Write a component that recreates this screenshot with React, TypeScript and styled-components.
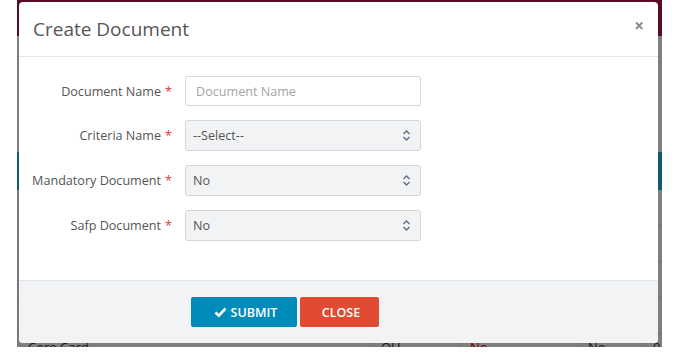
import * as React from 'react';
import styled, { createGlobalStyle } from 'styled-components';

const GlobalStyle = createGlobalStyle`
  html, body {
    margin: 0;
    padding: 0;
    background: #ffffff;
    font-family: "Open Sans", "Liberation Sans", sans-serif;
  }
`;

const Frame = styled.div`
  padding-left: 17px;
`;

const PageDiv = styled.div`
  position: relative;
  width: 645px;
  height: 347px;
  overflow: hidden;
  background: #ffffff;
`;

const NavBar = styled.div`
  height: 36px;
  background: #b8164a;
`;

const PageHeading = styled.div`
  height: 116px;
`;

const TableHead = styled.div`
  height: 38px;
  background: #1ab6de;
`;

const TableRow = styled.div`
  display: grid;
  grid-template-columns: 353px 89px 118px 65px 1fr;
  height: 35px;
  border-bottom: 1px solid #dddddd;
  font-size: 13px;
  line-height: 16px;
  color: #333;
`;

const Cell = styled.div<{ $red?: boolean }>`
  height: 100%;
  box-sizing: border-box;
  padding: 5px 0 0 10px;
  border-left: 1px solid #e6e6e6;
  color: ${p => (p.$red ? '#d40000' : '#333')};
`;

const Backdrop = styled.div`
  position: absolute;
  inset: 0;
  background: rgba(0, 0, 0, 0.5);
  padding: 2px 4px 4px 2px;
  display: flex;
`;

const Modal = styled.div`
  flex: 1;
  display: flex;
  flex-direction: column;
  background: #ffffff;
  border-radius: 4px;
  overflow: hidden;
`;

const ModalHeader = styled.div`
  height: 55px;
  display: flex;
  align-items: center;
  justify-content: space-between;
  padding: 0 14px 0 14px;
  box-sizing: border-box;
  border-bottom: 1px solid #e5e5e5;
`;

const Title = styled.h4`
  margin: 0;
  font-size: 19px;
  font-weight: 400;
  color: #555555;
`;

const CloseX = styled.span`
  font-size: 17px;
  font-weight: 700;
  color: #8a8a8a;
  line-height: 1;
  margin-top: -8px;
`;

const ModalBody = styled.div`
  flex: 1;
  padding-top: 19px;
  display: flex;
  flex-direction: column;
  gap: 14px;
`;

const FormRow = styled.div`
  display: flex;
  align-items: center;
  gap: 13px;
`;

const Label = styled.label`
  width: 153px;
  text-align: right;
  font-size: 12.6px;
  color: #555555;
`;

const Star = styled.span`
  color: #e0393e;
  margin-left: 4px;
`;

const TextInput = styled.input`
  width: 236px;
  height: 30px;
  box-sizing: border-box;
  border: 1px solid #d5d8dd;
  border-radius: 2px;
  padding: 0 10px;
  font-family: "Open Sans", "Liberation Sans", sans-serif;
  font-size: 12.6px;
  color: #555;
  outline: none;
  &::placeholder {
    color: #a5a5a5;
  }
`;

const SelectBox = styled.div`
  width: 236px;
  height: 31px;
  box-sizing: border-box;
  border: 1px solid #d3d6db;
  border-radius: 3px;
  background: #f2f3f5;
  padding: 0 9px 0 7px;
  display: flex;
  align-items: center;
  justify-content: space-between;
  font-size: 12.6px;
  color: #555555;
`;

const ModalFooter = styled.div`
  height: 63px;
  box-sizing: border-box;
  border-top: 1px solid #e1e4e8;
  background: #f2f3f5;
  display: flex;
  align-items: center;
  gap: 3px;
  padding-left: 172px;
`;

const Button = styled.button<{ $color: string; $width: number }>`
  width: ${p => p.$width}px;
  height: 30px;
  padding: 0 0 0 3px;
  border: none;
  border-radius: 2px;
  background: ${p => p.$color};
  color: #ffffff;
  font-family: "Open Sans", "Liberation Sans", sans-serif;
  font-size: 12.5px;
  font-weight: 600;
  display: flex;
  align-items: center;
  justify-content: center;
  gap: 4px;
`;

const Chevrons = () => (
  <svg width="9" height="13" viewBox="0 0 9 13">
    <path d="M1.5 5 L4.5 2 L7.5 5 M1.5 8 L4.5 11 L7.5 8" fill="none" stroke="#5e6d8c" strokeWidth="1.4" />
  </svg>
);

const CheckIcon = () => (
  <svg width="13" height="12" viewBox="0 0 13 12">
    <path d="M1.5 6.5 L4.8 9.6 L11.5 2.5" fill="none" stroke="#ffffff" strokeWidth="2.6" />
  </svg>
);

const rows = [
  { name: 'Document Name', input: true },
  { name: 'Criteria Name', value: '--Select--' },
  { name: 'Mandatory Document', value: 'No' },
  { name: 'Safp Document', value: 'No' },
];

const App = () => {
  return (
    <Frame>
      <GlobalStyle />
      <PageDiv>
        <NavBar />
        <PageHeading />
        <TableHead />
        {[0, 1, 2, 3].map(i => (
          <TableRow key={i}>
            <Cell />
            <Cell />
            <Cell />
            <Cell />
            <Cell />
          </TableRow>
        ))}
        <TableRow>
          <Cell>Core Card</Cell>
          <Cell>OU</Cell>
          <Cell $red>No</Cell>
          <Cell>No</Cell>
          <Cell>0</Cell>
        </TableRow>
        <Backdrop>
          <Modal>
            <ModalHeader>
              <Title>Create Document</Title>
              <CloseX>×</CloseX>
            </ModalHeader>
            <ModalBody>
              {rows.map(r => (
                <FormRow key={r.name}>
                  <Label>
                    {r.name}
                    <Star>*</Star>
                  </Label>
                  {r.input ? (
                    <TextInput placeholder="Document Name" />
                  ) : (
                    <SelectBox>
                      <span>{r.value}</span>
                      <Chevrons />
                    </SelectBox>
                  )}
                </FormRow>
              ))}
            </ModalBody>
            <ModalFooter>
              <Button $color="#008cba" $width={106}>
                <CheckIcon />
                SUBMIT
              </Button>
              <Button $color="#e04b31" $width={79}>CLOSE</Button>
            </ModalFooter>
          </Modal>
        </Backdrop>
      </PageDiv>
    </Frame>
  );
};

export default App;
